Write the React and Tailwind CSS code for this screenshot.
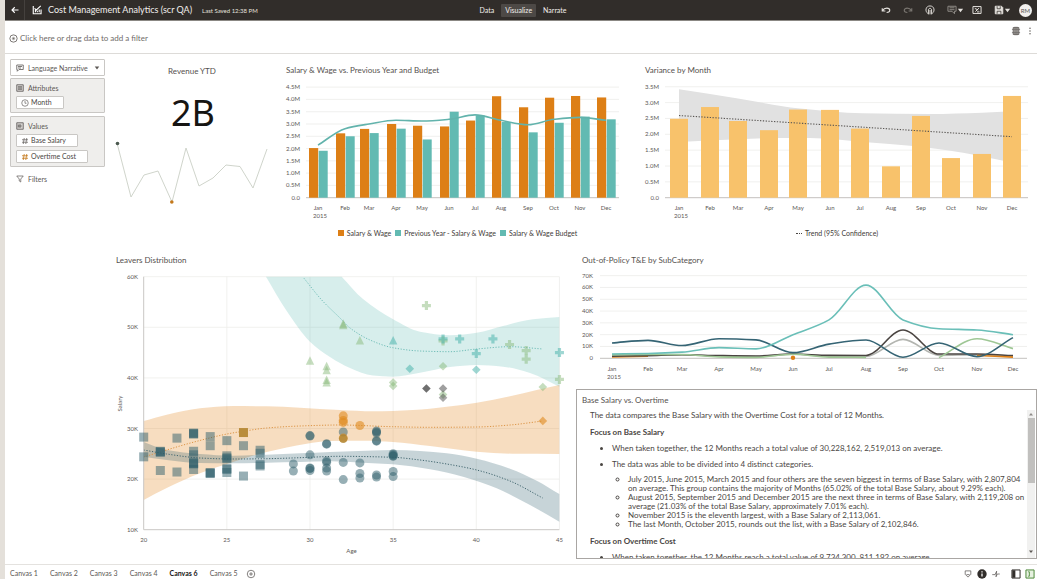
import React from "react";

const MONTHS = ["Jan", "Feb", "Mar", "Apr", "May", "Jun", "Jul", "Aug", "Sep", "Oct", "Nov", "Dec"];

/* Monotone cubic curve through points ordered along x (either direction). */
function curve(pts, start = "M") {
  const n = pts.length;
  const d = [];
  for (let i = 0; i < n - 1; i++) d.push((pts[i + 1][1] - pts[i][1]) / (pts[i + 1][0] - pts[i][0]));
  const m = pts.map((_, i) => {
    if (i === 0) return d[0];
    if (i === n - 1) return d[n - 2];
    if (d[i - 1] * d[i] <= 0) return 0;
    return (2 * d[i - 1] * d[i]) / (d[i - 1] + d[i]);
  });
  let out = `${start}${pts[0][0]},${pts[0][1]}`;
  for (let i = 0; i < n - 1; i++) {
    const [x0, y0] = pts[i];
    const [x1, y1] = pts[i + 1];
    const h = (x1 - x0) / 3;
    out += `C${x0 + h},${y0 + m[i] * h} ${x1 - h},${y1 - m[i + 1] * h} ${x1},${y1}`;
  }
  return out;
}

const band = (upper, lower) => `${curve(upper)}${curve([...lower].reverse(), "L")}Z`;

function MonthAxis({ xs, y }) {
  return (
    <g fontSize="6" fill="#5c5855">
      {MONTHS.map((m, i) => (
        <text key={m} x={xs[i]} y={y} textAnchor="middle">{m}</text>
      ))}
      <text x={xs[0] + 2} y={y + 8} textAnchor="middle">2015</text>
    </g>
  );
}

function ValueAxis({ ticks, scale, labelX, x1, x2 }) {
  return (
    <g fontSize="6" fill="#5c5855">
      {ticks.map(([v, label]) => (
        <g key={label}>
          <line x1={x1} x2={x2} y1={scale(v)} y2={scale(v)} stroke={v === 0 ? "#c4c1be" : "#ececea"} strokeWidth={v === 0 ? 1 : 0.8} />
          <text x={labelX} y={scale(v) + 2} textAnchor="end">{label}</text>
        </g>
      ))}
    </g>
  );
}

function Title({ children, className = "" }) {
  return <h2 className={"text-[8px] leading-3 text-[#55514e] " + className}>{children}</h2>;
}

/* ---------- Revenue ---------- */

const SPARK = [[117, 143], [131, 197], [144, 175], [158, 171], [172, 202], [186, 148], [199, 186], [213, 178], [226, 165], [240, 166.5], [253, 188], [267, 149]];

function Revenue() {
  return (
    <section className="min-w-0 pt-[11px] text-center">
      <Title className="pr-1">Revenue YTD</Title>
      <p className="mt-4 pr-0.5 font-['Noto_Sans','Open_Sans',sans-serif] text-[36px] leading-10 text-[#161513]">2B</p>
      <svg viewBox="110 133 168 80" className="block w-full" role="img" aria-label="Revenue by month">
        <polyline points={SPARK.map((p) => p.join(",")).join(" ")} fill="none" stroke="#c9cfc5" strokeWidth="0.9" />
        <circle cx="117.5" cy="143.5" r="1.8" fill="#4c5a50" />
        <circle cx="171.8" cy="202" r="1.8" fill="#c4791c" />
      </svg>
    </section>
  );
}

/* ---------- Salary & Wage ---------- */

const SALARY_X = [318, 345, 369, 396, 422, 449, 475, 501, 528, 554, 580, 606];
const SALARY = [2.02, 2.62, 2.8, 3.0, 2.93, 2.9, 3.14, 4.13, 3.68, 4.07, 4.14, 4.08];
const PREVIOUS = [1.91, 2.5, 2.63, 2.81, 2.37, 3.5, 3.35, 3.08, 2.66, 3.05, 3.3, 3.19];
const BUDGET = [2.14, 2.81, 3.0, 3.15, 3.12, 3.19, 3.37, 3.15, 2.97, 3.19, 3.27, 3.15];
const SALARY_TICKS = [[4.5, "4.5M"], [4, "4.0M"], [3.5, "3.5M"], [3, "3.0M"], [2.5, "2.5M"], [2, "2.0M"], [1.5, "1.5M"], [1, "1.0M"], [0.5, "0.5M"], [0, "0.0"]];

function SalaryChart() {
  const y = (v) => 197.7 - v * 24.57;
  return (
    <section className="min-w-0 pt-[10px]">
      <Title className="pl-2">Salary &amp; Wage vs. Previous Year and Budget</Title>
      <svg viewBox="278 76 359 146" className="block w-full" role="img" aria-label="Salary and wage by month">
        <ValueAxis ticks={SALARY_TICKS} scale={y} labelX={300} x1={306} x2={619} />
        {SALARY_X.map((x, i) => (
          <g key={x}>
            <rect x={x - 9} y={y(SALARY[i])} width="9.2" height={197.7 - y(SALARY[i])} fill="#dd7f16" />
            <rect x={x + 0.7} y={y(PREVIOUS[i])} width="9" height={197.7 - y(PREVIOUS[i])} fill="#62bab2" />
          </g>
        ))}
        <path d={curve(SALARY_X.map((x, i) => [x, y(BUDGET[i])]))} fill="none" stroke="#62b3ac" strokeWidth="1.6" />
        <MonthAxis xs={SALARY_X} y={210} />
      </svg>
      <ul className="flex h-[22px] items-center justify-center gap-1 text-[7px] text-[#3f3b38]">
        <li className="flex items-center gap-[3px]"><i className="size-1.5 bg-[#dd7f16]" />Salary &amp; Wage</li>
        <li className="flex items-center gap-[3px]"><i className="size-1.5 bg-[#62bab2]" />Previous Year - Salary &amp; Wage</li>
        <li className="flex items-center gap-[3px]"><i className="size-1.5 bg-[#62bab2]" />Salary &amp; Wage Budget</li>
      </ul>
    </section>
  );
}

/* ---------- Variance ---------- */

const VAR_X = [679, 710, 738, 769, 798, 830, 860, 891, 921, 951, 982, 1012];
const VARIANCE = [2.49, 2.86, 2.42, 2.13, 2.78, 2.77, 2.18, 0.99, 2.58, 1.25, 1.38, 3.21];
const VAR_TICKS = [[3.5, "3.5M"], [3, "3.0M"], [2.5, "2.5M"], [2, "2.0M"], [1.5, "1.5M"], [1, "1.0M"], [0.5, "0.5M"], [0, "0.0"]];

function VarianceChart() {
  const y = (v) => 197.7 - v * 31.7;
  return (
    <section className="min-w-0 pt-[10px]">
      <Title className="pl-2">Variance by Month</Title>
      <svg viewBox="637 76 400 146" className="block w-full" role="img" aria-label="Variance by month">
        <ValueAxis ticks={VAR_TICKS} scale={y} labelX={659} x1={665} x2={1028} />
        <path
          d={band(
            [[679, 89.3], [738, 98.5], [800, 108.5], [863, 113.3], [930, 114], [982, 112.7], [1012, 111.3]],
            [[679, 142], [738, 139.3], [777, 138], [810, 138], [860, 141.7], [913, 146], [963, 152.7], [1012, 162.5]]
          )}
          fill="#e1e1e1"
        />
        {VAR_X.map((x, i) => (
          <rect key={x} x={x - 9} y={y(VARIANCE[i])} width="18" height={197.7 - y(VARIANCE[i])} fill="#f8c26b" />
        ))}
        <line x1="679" y1="115.5" x2="1012" y2="136.7" stroke="#5a5754" strokeWidth="1.1" strokeDasharray="1.3 1.5" />
        <MonthAxis xs={VAR_X} y={210} />
      </svg>
      <p className="flex h-[22px] items-center justify-center gap-[3px] text-[7px] text-[#3f3b38]">
        <i className="w-1.5 border-t border-dotted border-[#4a4643]" />
        Trend (95% Confidence)
      </p>
    </section>
  );
}

/* ---------- Leavers ---------- */

const SQUARES = [
  [20, 28.3], [20, 24.4], [21, 25.4], [21, 25.3], [21, 25.5], [21, 21.7], [22, 28.1], [22, 21.4],
  [23, 29], [23, 28.9], [23, 29.1], [23, 25.5], [23, 24.8], [23, 23.1], [23, 23], [23, 23.2], [23, 21.9],
  [24, 28.4], [24, 26.6], [24, 21.3], [24, 21.1], [24, 21.2], [25, 27.6], [25, 24.6], [25, 24.2], [25, 24], [25, 22.1],
  [25, 21.9], [25, 21.3], [26, 26.6], [26, 20.6], [27, 25.7], [27, 25.1], [27, 22.9], [27, 22.6],
];
const CIRCLES = [
  [29, 23], [29, 21.6], [30, 28.5], [30, 28.6], [30, 24.8], [30, 22.2], [30, 22.1], [30, 21.7], [31, 26.9], [31, 27],
  [31, 23.6], [31, 22.2], [31, 21.6], [31, 23.3], [32, 29.3], [32, 23.3], [32, 19.9], [33, 23.2], [33, 21.1], [33, 20.2],
  [34, 29.5], [34, 29.3], [34, 29.1], [34, 27.5], [34, 27.6], [34, 20.8], [34, 20.4], [35, 25], [35, 24.8], [35, 24.5], [35, 24.6],
  [35, 21.5], [35, 20.5],
];
const ORANGE_CIRCLES = [[32, 32.5], [32, 31.6], [32, 31.2], [32, 28.1], [33, 30.6]];
const GREEN_TRIANGLES = [[30, 43.4], [31, 42.3], [31, 41.5], [31, 39.6], [31, 39.1], [32, 50.7], [32, 50.4], [33, 47.4]];
const GREEN_DIAMONDS = [[35, 39.1], [35, 38.4], [38, 42.3], [38, 36.7], [44, 38.2]];
const TEAL_DIAMONDS = [[36, 41.8], [40, 41.6]];
const GREEN_PLUSES = [[37, 54.3], [38, 47.3], [42, 46.6], [43, 45.4], [43, 43.7], [45, 39.7]];
const TEAL_PLUSES = [[38, 47.7], [39, 47.7], [40, 44.8], [41, 47.7], [45, 45]];

function LeaversChart() {
  const x = (age) => 143.7 + (age - 20) * 16.63;
  const y = (k) => 529.7 - (k - 10) * 5.06;
  const place = ([a, k]) => `translate(${x(a)} ${y(k)})`;
  const diamond = "M0,-4.3L4.3,0L0,4.3L-4.3,0Z";
  const plus = "M-1.6,-4.5H1.6V-1.6H4.5V1.6H1.6V4.5H-1.6V1.6H-4.5V-1.6H-1.6Z";
  const triangle = "M0,-4.5L4.2,4H-4.2Z";
  return (
    <section className="min-w-0 pt-1">
      <Title className="pl-1.5">Leavers Distribution</Title>
      <svg viewBox="110 266 462 296" className="block w-full" role="img" aria-label="Salary against age">
        <g stroke="#ededeb" strokeWidth="0.8">
          {[60, 50, 40, 30, 20].map((k) => <line key={k} x1="143.7" x2="559.3" y1={y(k)} y2={y(k)} />)}
          {[25, 30, 35, 40, 45].map((a) => <line key={a} x1={x(a)} x2={x(a)} y1="276.7" y2="529.7" />)}
        </g>
        <path
          d={band(
            [[341.7, 276.7], [363, 299], [392.7, 319], [420, 331.7], [450, 335.3], [476.7, 332.7], [503, 326], [533, 319.3], [559.3, 317]],
            [[266, 276.7], [286.7, 311], [310, 341.7], [330, 357], [350, 368], [373, 375.5], [392.7, 376.7], [420, 372.7], [450, 367], [476.7, 365], [503, 366.7], [530, 373], [559.3, 386.7]]
          )}
          fill="#56b7b0" fillOpacity="0.24"
        />
        <path
          d={band(
            [[143.7, 421], [166.7, 414.7], [200, 408.3], [233, 406], [266.7, 406.3], [300, 407.7], [340, 410], [373, 411.3], [413, 410], [446.7, 406.7], [476.7, 402.7], [510, 396.3], [536.7, 390], [559.3, 385]],
            [[143.7, 500], [166.7, 488], [200, 473.3], [233, 462], [266.7, 452], [306.7, 443.7], [330, 441], [363, 440.7], [392.7, 442], [430, 446], [476.7, 451.7], [516.7, 453.8], [559.3, 454]]
          )}
          fill="#e5953a" fillOpacity="0.32"
        />
        <path
          d={band(
            [[143.7, 442], [166.7, 450], [200, 454], [233, 455.7], [266.7, 454.7], [300, 453.3], [330, 452], [373, 450.5], [392.7, 450], [420, 451], [446.7, 453.3], [476.7, 458.7], [510, 468.7], [536.7, 480.7], [559.3, 494]],
            [[143.7, 456.7], [166.7, 460], [200, 463], [233, 463.3], [266.7, 462.7], [300, 462], [330, 461.3], [363, 462.7], [392.7, 464.3], [430, 469.3], [463, 476.7], [496.7, 488.3], [530, 505], [559.3, 521.7]]
          )}
          fill="#315f6e" fillOpacity="0.27"
        />
        <g fill="none" strokeWidth="1" strokeDasharray="1.2 1.6">
          <path d={curve([[304, 278.3], [321.7, 300], [340, 318], [350, 328], [370, 340], [392.7, 347.7], [420, 351], [450, 351.7], [476.7, 349], [510, 346.7], [542.7, 349]])} stroke="#6fbdb7" />
          <path d={curve([[143.7, 457], [160, 452], [193, 442.3], [227, 434], [243, 431.3], [266.7, 428], [300, 426], [340, 425], [392.7, 426.7], [430, 427.3], [476.7, 427], [510, 425], [542.7, 421]])} stroke="#dc9445" />
          <path d={curve([[143.7, 450], [166.7, 454], [200, 458], [233, 459], [266.7, 458.7], [300, 457.7], [340, 456.3], [392.7, 457.3], [420, 460], [446.7, 464], [476.7, 470], [510, 481], [542.7, 498]])} stroke="#41666f" />
        </g>
        <path d="M143.7,276.7V529.7H559.3" fill="none" stroke="#c9c7c4" strokeWidth="1" />
        <g fill="#2f5f6b" fillOpacity="0.5">
          {SQUARES.map((p, i) => <rect key={i} x="-4.5" y="-4.5" width="9" height="9" transform={place(p)} />)}
          {CIRCLES.map((p, i) => <circle key={i} r="4.5" transform={place(p)} />)}
        </g>
        <rect x="-4.5" y="-4.5" width="9" height="9" transform={place([26, 29.2])} fill="#b98d3c" />
        <g fill="#e08a1e" fillOpacity="0.6">
          {ORANGE_CIRCLES.map((p, i) => <circle key={i} r="4.5" transform={place(p)} />)}
          <path d={diamond} transform={place([44, 31.5])} />
        </g>
        <circle r="4.3" transform={place([32, 28])} fill="#a8812f" fillOpacity="0.7" />
        <g fill="#85b878" fillOpacity="0.48">
          {GREEN_TRIANGLES.map((p, i) => <path key={i} d={triangle} transform={place(p)} />)}
          {GREEN_DIAMONDS.map((p, i) => <path key={i} d={diamond} transform={place(p)} />)}
          {GREEN_PLUSES.map((p, i) => <path key={i} d={plus} transform={place(p)} />)}
        </g>
        <g fill="#3fb0a8" fillOpacity="0.5">
          <path d={triangle} transform={place([35, 47.4])} />
          {TEAL_DIAMONDS.map((p, i) => <path key={i} d={diamond} transform={place(p)} />)}
          {TEAL_PLUSES.map((p, i) => <path key={i} d={plus} transform={place(p)} />)}
        </g>
        <g fill="#3f3f3f">
          <path d={diamond} transform={place([37, 37.9])} fillOpacity="0.75" />
          <path d={diamond} transform={place([38, 37.9])} fillOpacity="0.5" />
          <path d={diamond} transform={place([38, 36.1])} fillOpacity="0.45" />
        </g>
        <g fontSize="6" fill="#5c5855">
          {[60, 50, 40, 30, 20, 10].map((k) => <text key={k} x="138" y={y(k) + 2} textAnchor="end">{k}K</text>)}
          {[20, 25, 30, 35, 40, 45].map((a) => <text key={a} x={x(a)} y="541.5" textAnchor="middle">{a}</text>)}
          <text x="351.5" y="553" textAnchor="middle">Age</text>
          <text transform="translate(122 403.5) rotate(-90)" textAnchor="middle">Salary</text>
        </g>
      </svg>
    </section>
  );
}

/* ---------- Out-of-Policy ---------- */

const POLICY_X = [612, 648, 682, 719, 756, 793, 829, 866, 903, 939, 977, 1013];
const POLICY = [
  { color: "#dd7f16", from: 0, values: [1.2, 1.8] },
  { color: "#b3b5b0", from: 0, values: [2.3, 2.6, 3, 1.8, 1.5, 3.4, 1.8, 1.5, 16, 2.5, 3, 2] },
  { color: "#4a4441", from: 0, values: [1.8, 2.3, 3, 2.3, 2, 3.6, 2.5, 2.4, 24, 3.6, 3.6, 2.3] },
  { color: "#dd7f16", from: 10, values: [2.4, 1] },
  { color: "#9fc795", from: 0, values: [2.9, 3.2, 3.2, 1.2, 0.8, 3.4, 1, 0.8] },
  { color: "#9fc795", from: 9, values: [0.6, 16.6, 8.2] },
  { color: "#356474", from: 0, values: [13, 15.2, 10.8, 16.6, 15.6, 4.8, 12, 15.5, 0.9, 13, 1.4, 17.5] },
  { color: "#6abfb8", from: 0, values: [3.7, 4.1, 5.2, 9, 8, 20, 32.5, 62, 32.5, 25, 24, 20] },
];
const POLICY_TICKS = [[70, "70K"], [60, "60K"], [50, "50K"], [40, "40K"], [30, "30K"], [20, "20K"], [10, "10K"], [0, "0"]];

function PolicyChart() {
  const y = (k) => 358.3 - k * 1.181;
  return (
    <section className="pt-1">
      <Title className="pl-2.5">Out-of-Policy T&amp;E by SubCategory</Title>
      <svg viewBox="572 266 465 118" className="block w-full" role="img" aria-label="Out-of-policy expenses by month">
        <ValueAxis ticks={POLICY_TICKS} scale={y} labelX={593} x1={600} x2={1027} />
        {POLICY.map((s, i) => (
          <path key={i} d={curve(s.values.map((v, j) => [POLICY_X[s.from + j], y(v)]))} fill="none" stroke={s.color} strokeWidth="1.6" />
        ))}
        <circle cx="793" cy="357.8" r="2.2" fill="#dd7f16" />
        <MonthAxis xs={POLICY_X} y={370.5} />
      </svg>
    </section>
  );
}

/* ---------- Narrative ---------- */

function Narrative() {
  return (
    <section className="ml-1 mt-[5px] flex h-[170px] flex-col overflow-hidden border border-[#a9a6a3] text-[8px] leading-[9px] text-[#4a4643]">
      <Title className="pl-[5px] pt-1">Base Salary vs. Overtime</Title>
      <div className="mt-1 flex min-h-0 flex-1">
        <div className="min-w-0 flex-1 overflow-y-auto pl-[13px] [scrollbar-width:none]">
          <p className="pt-px">The data compares the Base Salary with the Overtime Cost for a total of 12 Months.</p>
          <h3 className="mt-2 font-bold">Focus on Base Salary</h3>
          <ul className="mt-[7px] list-disc pl-[22px]">
            <li>When taken together, the 12 Months reach a total value of 30,228,162, 2,519,013 on average.</li>
            <li className="mt-[7px]">
              The data was able to be divided into 4 distinct categories.
              <ul className="mt-[6px] list-[circle] pl-4">
                <li>July 2015, June 2015, March 2015 and four others are the seven biggest in terms of Base Salary, with 2,807,804 on&nbsp;average. This group contains the majority of Months (65.02% of the total Base Salary, about 9.29% each).</li>
                <li>August 2015, September 2015 and December 2015 are the next three in terms of Base Salary, with 2,119,208 on average (21.03% of the total Base Salary, approximately 7.01% each).</li>
                <li>November 2015 is the eleventh largest, with a Base Salary of 2,113,061.</li>
                <li>The last Month, October 2015, rounds out the list, with a Base Salary of 2,102,846.</li>
              </ul>
            </li>
          </ul>
          <h3 className="mt-2 font-bold">Focus on Overtime Cost</h3>
          <ul className="mt-[7px] list-disc pl-[22px]">
            <li>When taken together, the 12 Months reach a total value of 9,734,300, 811,192 on average.</li>
          </ul>
        </div>
        <div className="mr-px flex w-2 flex-col items-center justify-between bg-[#f1f1f0] pb-0.5">
          <svg viewBox="0 0 8 8" className="size-2"><path d="M2 5.5L4 3L6 5.5Z" fill="#8d8a87" /></svg>
          <span className="w-[7px] flex-1 bg-[#c1c0be]" />
          <span className="w-full flex-1" />
          <svg viewBox="0 0 8 8" className="size-2"><path d="M2 2.5L4 5L6 2.5Z" fill="#5c5855" /></svg>
        </div>
      </div>
    </section>
  );
}

/* ---------- Shell ---------- */

function Icon({ children, className = "size-2.5" }) {
  return (
    <svg viewBox="0 0 16 16" className={"shrink-0 " + className} fill="none" stroke="currentColor" strokeWidth="1.6" aria-hidden="true">
      {children}
    </svg>
  );
}

function Caret() {
  return <Icon className="size-[7px]"><path d="M2 4H14L8 12Z" fill="currentColor" stroke="none" /></Icon>;
}

function Header() {
  return (
    <header className="grid h-[21px] grid-cols-[1fr_auto_1fr] items-center border-b border-[#8b8884] bg-[#312d2a] text-white">
      <div className="flex h-full items-center">
        <button aria-label="Back" className="flex h-full w-5 items-center justify-center border-r border-[#45413e]">
          <Icon className="size-2"><path d="M15 8H2.5M7.500 2.500L2 8L7.500 13.500" strokeWidth="2.200" /></Icon>
        </button>
        <Icon className="ml-[7px] size-2.5">
          <path d="M2 1.500V14H14.500V7" strokeWidth="1.800" />
          <path d="M5.500 11.500V7.500M8.500 11.500V9M11.500 11.500V7M4 5.500L7 8L14 1.500" strokeWidth="1.800" />
        </Icon>
        <h1 className="ml-1.5 text-[9px] leading-3 whitespace-nowrap text-[#f1efed]">Cost Management Analytics (scr QA)</h1>
        <span className="ml-2.5 text-[6px] whitespace-nowrap text-[#e4e1dd]">Last Saved 12:38 PM</span>
      </div>
      <nav className="flex items-center gap-1.5 pl-1 text-[7px] text-[#f1efed]">
        <a href="#data" className="px-px">Data</a>
        <a href="#visualize" className="flex h-[13px] items-center rounded-[1px] bg-[#4d4946] px-1">Visualize</a>
        <a href="#narrate" className="px-px">Narrate</a>
      </nav>
      <div className="flex items-center justify-end gap-3 pr-[5px] text-[#e4e1dd]">
        <button aria-label="Undo"><Icon><path d="M2 5V9.500H7M2.500 9C5.500 3.500 14 4 14 8.500C14 11.500 12 12 9 12" strokeWidth="1.800" /></Icon></button>
        <button aria-label="Redo" className="text-[#78746f]"><Icon><path d="M14 5V9.500H9M13.500 9C10.500 3.500 2 4 2 8.500C2 11.500 4 12 7 12" strokeWidth="1.800" /></Icon></button>
        <button aria-label="Insights">
          <Icon><path d="M4.500 13.500C-.5 10 1 1.500 8 1.500S16.500 10 11.500 13.500M5.500 15V8C5.500 4.500 10.500 4.500 10.500 8V15M8 8V15" strokeWidth="1.500" /></Icon>
        </button>
        <button aria-label="Comments" className="flex items-center">
          <Icon className="size-2.5 text-[#8d8984]"><path d="M1.500 2H14.500V10H12V14L8 10H1.500ZM4 4.500H12M4 7.500H12" /></Icon>
          <Caret />
        </button>
        <button aria-label="Preview" className="-ml-1">
          <Icon><path d="M1.500 2.500H14.500V13.500H1.500ZM4.500 5.500L10 8M11 5L5.500 10.500M8 11H12" /></Icon>
        </button>
        <button aria-label="Save" className="flex items-center">
          <Icon><path d="M2 2H12L14 4V14H2Z" fill="currentColor" /><path d="M5 2V6H10V2M5 14V10H11V14" stroke="#312d2a" strokeWidth="1.200" /></Icon>
          <Caret />
        </button>
        <button aria-label="Account" className="-ml-1 flex size-[13px] items-center justify-center rounded-full bg-[#f1efed] text-[6px] text-[#5c5855]">RM</button>
      </div>
    </header>
  );
}

function FilterBar() {
  return (
    <div className="flex h-[33px] items-center border-b border-[#dddbd8] pr-[3px] pl-1 text-[#6f6b68]">
      <button className="flex items-center gap-0.5 pt-0.5 text-[8px] leading-3">
        <Icon className="size-[9px]"><circle cx="8" cy="8" r="6.500" /><path d="M8 5V11M5 8H11M6 6L10 10M10 6L6 10" strokeWidth="1" /></Icon>
        Click here or drag data to add a filter
      </button>
      <button aria-label="Auto apply" className="mr-[5px] mb-3 ml-auto">
        <Icon><path d="M3.500 2.500H12.500V13.500H3.500Z" fill="#a5a29f" /><path d="M6.500 1V15M9.500 1V15M1.500 5.500H14.500M1.500 10.500H14.500" strokeWidth="1.200" /></Icon>
      </button>
      <button aria-label="More options" className="mb-3">
        <Icon className="size-2"><g fill="currentColor" stroke="none"><circle cx="8" cy="2.500" r="1.600" /><circle cx="8" cy="8" r="1.600" /><circle cx="8" cy="13.500" r="1.600" /></g></Icon>
      </button>
    </div>
  );
}

function Chip({ icon, children, className }) {
  return (
    <button className={"flex h-[13px] items-center gap-0.5 rounded-[1px] border border-[#c9c7c4] bg-white pl-1 text-[7px] text-[#4a4643] " + className}>
      {icon}
      {children}
    </button>
  );
}

function Hash({ className }) {
  return <Icon className={"size-2 " + className}><path d="M6.500 2L4.500 14M11.500 2L9.500 14M2 5.500H14M2 10.500H14" strokeWidth="1.600" /></Icon>;
}

function ShelfTitle({ children, columns }) {
  return (
    <h3 className="flex h-3 items-center gap-1 text-[7px] text-[#5c5855]">
      <Icon className="size-2">
        <path d="M1.500 1.500H14.500V14.500H1.500Z" fill="#d5d3d0" />
        <path d={columns ? "M8 4V12M4.500 8H11.500M4.500 5V11" : "M4 5.500H12M4 8H12M4 10.500H12"} />
      </Icon>
      {children}
    </h3>
  );
}

function Sidebar() {
  return (
    <aside className="w-[105px] shrink-0 pt-[5px] pr-[5px] pl-[5px]">
      <div className="flex h-[17px] items-center rounded-[1px] border border-[#c9c7c4] bg-white pr-1 pl-[5px] text-[#5c5855]">
        <Icon className="size-2"><path d="M1.500 2H14.500V11H6L2.500 14.500V11H1.500ZM4 5H12M4 8H10" /></Icon>
        <select aria-label="Visualization type" className="min-w-0 flex-1 appearance-none bg-transparent pl-1 text-[7px] leading-3 outline-none">
          <option>Language Narrative</option>
        </select>
        <Icon className="size-1.5"><path d="M2 4H14L8 12Z" fill="currentColor" stroke="none" /></Icon>
      </div>
      <section className="mt-0.5 rounded-[1px] border border-[#c9c7c4] bg-[#efeeec] px-[5px] pt-[3px] pb-[3px]">
        <ShelfTitle>Attributes</ShelfTitle>
        <Chip className="mt-0.5 w-12" icon={<Icon className="size-2"><circle cx="8" cy="8" r="6.500" strokeWidth="1.200" /><path d="M8 4V8.500H11" strokeWidth="1.200" /></Icon>}>Month</Chip>
      </section>
      <section className="mt-[3px] rounded-[1px] border border-[#c9c7c4] bg-[#efeeec] px-[5px] pt-[3px] pb-[3px]">
        <ShelfTitle columns>Values</ShelfTitle>
        <Chip className="mt-0.5 w-[62px]" icon={<Hash className="text-[#6f6b68]" />}>Base Salary</Chip>
        <Chip className="mt-[3px] w-[72px]" icon={<Hash className="text-[#c4791c]" />}>Overtime Cost</Chip>
      </section>
      <h3 className="mt-[6px] flex items-center gap-1 pl-1.5 text-[7px] leading-3 text-[#5c5855]">
        <Icon className="size-2"><path d="M1.500 2H14.500L9.500 8V14L6.500 12V8Z" strokeWidth="1.400" /></Icon>
        Filters
      </h3>
    </aside>
  );
}

const CANVASES = ["Canvas 1", "Canvas 2", "Canvas 3", "Canvas 4", "Canvas 6", "Canvas 5"];

function Footer() {
  return (
    <footer className="flex h-[15px] items-center border-t border-[#e4e2df] pt-[3px] pr-0.5 pl-[5px] text-[7px] text-[#5c5855]">
      <nav className="flex items-center gap-3">
        {CANVASES.map((c) => (
          <button key={c} className={c === "Canvas 6" ? "font-bold text-[#161513]" : ""}>{c}</button>
        ))}
        <button aria-label="Add canvas" className="-ml-1"><Icon><circle cx="8" cy="8" r="6" strokeWidth="1.200" /><path d="M8 5V11M5 8H11" strokeWidth="1.200" /></Icon></button>
      </nav>
      <div className="ml-auto flex items-center gap-1">
        <button aria-label="Shield"><Icon><path d="M3.500 3H12.500V8.500L8 13L3.500 8.500ZM5.500 9H10.500" strokeWidth="1.200" /></Icon></button>
        <button aria-label="Information"><Icon><circle cx="8" cy="8" r="7.500" fill="#312d2a" stroke="none" /><path d="M8 7V12M8 3.500V5.500" stroke="#fff" strokeWidth="2" /></Icon></button>
        <button aria-label="Performance" className="mr-1.5"><Icon><path d="M2 9H6.500L9 3.500L8 12.500L10 8H14" strokeWidth="1.200" /></Icon></button>
        <button aria-label="Show data panel" className="text-[#312d2a]"><Icon><path d="M1.500 1.500H14.500V14.500H1.500Z" /><path d="M2 2H7V14H2Z" fill="currentColor" stroke="none" /></Icon></button>
        <button aria-label="Show grammar panel" className="text-[#4f8a3c]"><Icon><path d="M1.500 1.500H14.500V14.500H1.500Z" fill="#e6f1e0" /><path d="M5 4.500H7V11.500H5" strokeWidth="1.400" /></Icon></button>
      </div>
    </footer>
  );
}

export default function App() {
  return (
    <div className="flex min-h-screen bg-white font-['Lato','Open_Sans',sans-serif]">
      <div className="w-[5px] shrink-0 bg-[#e4e0da]" />
      <div className="flex min-w-0 flex-1 flex-col">
        <Header />
        <FilterBar />
        <main className="flex flex-1">
          <Sidebar />
          <div className="min-w-0 flex-1">
            <div className="grid grid-cols-[168fr_359fr_400fr] pb-1.5">
              <Revenue />
              <SalaryChart />
              <VarianceChart />
            </div>
            <div className="grid grid-cols-[462fr_465fr]">
              <LeaversChart />
              <div className="min-w-0">
                <PolicyChart />
                <Narrative />
              </div>
            </div>
          </div>
        </main>
        <Footer />
      </div>
    </div>
  );
}
